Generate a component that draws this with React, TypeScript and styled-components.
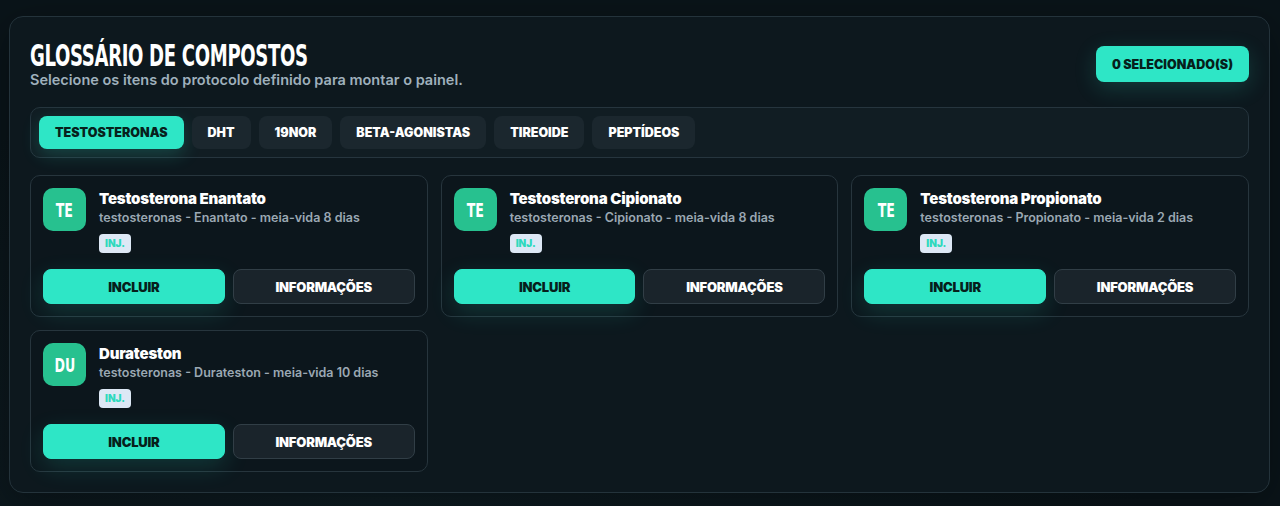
import React from "react";
import styled, { createGlobalStyle } from "styled-components";

const GlobalStyle = createGlobalStyle`
  html, body {
    margin: 0;
    padding: 0;
    background: #0a1419;
  }
  body {
    font-family: Inter, "Noto Sans", sans-serif;
    color: #ffffff;
  }
  * { box-sizing: border-box; }
`;

type Compound = {
  code: string;
  name: string;
  ester: string;
  halfLife: string;
};

const tabs = ["Testosteronas", "DHT", "19Nor", "Beta-agonistas", "Tireoide", "Peptídeos"];

const compounds: Compound[] = [
  { code: "TE", name: "Testosterona Enantato", ester: "Enantato", halfLife: "8 dias" },
  { code: "TE", name: "Testosterona Cipionato", ester: "Cipionato", halfLife: "8 dias" },
  { code: "TE", name: "Testosterona Propionato", ester: "Propionato", halfLife: "2 dias" },
  { code: "DU", name: "Durateston", ester: "Durateston", halfLife: "10 dias" },
];

const App = () => (
  <Page>
    <GlobalStyle />
    <Panel>
      <Header>
        <div>
          <Title>Glossário de compostos</Title>
          <Subtitle>Selecione os itens do protocolo definido para montar o painel.</Subtitle>
        </div>
        <CounterButton>0 selecionado(s)</CounterButton>
      </Header>

      <TabBar>
        {tabs.map((t, i) => (
          <Tab key={t} $active={i === 0}>
            {t}
          </Tab>
        ))}
      </TabBar>

      <Grid>
        {compounds.map((c) => (
          <Card key={c.name}>
            <CardTop>
              <Avatar>
                <span>{c.code}</span>
              </Avatar>
              <CardInfo>
                <CardTitle>{c.name}</CardTitle>
                <CardMeta>
                  testosteronas - {c.ester} - meia-vida {c.halfLife}
                </CardMeta>
                <Badge>INJ.</Badge>
              </CardInfo>
            </CardTop>
            <Actions>
              <ActionButton $primary>Incluir</ActionButton>
              <ActionButton>Informações</ActionButton>
            </Actions>
          </Card>
        ))}
      </Grid>
    </Panel>
  </Page>
);

export default App;

const Page = styled.div`
  width: 1280px;
  height: 506px;
  padding: 16px 10px 13px 9px;
  background: radial-gradient(ellipse at 30% 100%, #0e1c22 0%, #0a1419 60%);
`;

const Panel = styled.section`
  height: 100%;
  border: 1px solid #24333b;
  border-radius: 14px;
  background: #0d181e;
  padding: 24px 20px 20px 20px;
  box-shadow: 0 10px 40px rgba(0, 0, 0, 0.35);
`;

const Header = styled.header`
  display: flex;
  justify-content: space-between;
  align-items: flex-start;
  margin-bottom: 18px;
`;

const condensed = `"DejaVu Sans", "Liberation Sans", sans-serif`;

const Title = styled.h1`
  margin: 0;
  font-family: ${condensed};
  font-stretch: condensed;
  font-weight: 700;
  font-size: 30px;
  line-height: 30px;
  letter-spacing: -0.5px;
  text-transform: uppercase;
  color: #ffffff;
  white-space: nowrap;
  transform: scaleX(0.67);
  transform-origin: left center;
  width: 280px;
`;

const Subtitle = styled.p`
  margin: 0;
  font-size: 14.5px;
  font-weight: 600;
  line-height: 18px;
  color: #9fb0bc;
`;

const CounterButton = styled.button`
  margin-top: 5px;
  height: 36px;
  padding: 0 16px;
  border: none;
  border-radius: 8px;
  background: #2ee6c6;
  color: #06201b;
  font-family: Inter, sans-serif;
  font-weight: 900;
  font-size: 12.5px;
  text-transform: uppercase;
  box-shadow: 0 6px 22px rgba(46, 230, 198, 0.18);
`;

const TabBar = styled.nav`
  display: flex;
  gap: 8px;
  padding: 8px;
  border: 1px solid #26353e;
  border-radius: 10px;
  background: #111d23;
  margin-bottom: 17px;
`;

const Tab = styled.button<{ $active?: boolean }>`
  height: 33px;
  padding: 0 16px;
  border: none;
  border-radius: 8px;
  background: ${({ $active }) => ($active ? "#2ee6c6" : "#1b272e")};
  color: ${({ $active }) => ($active ? "#07211c" : "#ffffff")};
  font-family: Inter, sans-serif;
  font-weight: 900;
  font-size: 12.5px;
  text-transform: uppercase;
  box-shadow: ${({ $active }) => ($active ? "0 6px 18px rgba(46, 230, 198, 0.2)" : "none")};
`;

const Grid = styled.div`
  display: grid;
  grid-template-columns: repeat(3, 1fr);
  gap: 13px 13px;
`;

const Card = styled.article`
  height: 142px;
  padding: 12px;
  border: 1px solid #27353d;
  border-radius: 10px;
  background: #0c161c;
`;

const CardTop = styled.div`
  display: flex;
  gap: 13px;
`;

const Avatar = styled.div`
  flex: none;
  width: 43px;
  height: 43px;
  border-radius: 10px;
  background: #27c18f;
  display: flex;
  align-items: center;
  justify-content: center;
  color: #ffffff;

  span {
    font-family: ${condensed};
    font-stretch: condensed;
    font-weight: 700;
    font-size: 20px;
    transform: scaleX(0.7);
  }
`;

const CardInfo = styled.div`
  display: flex;
  flex-direction: column;
  align-items: flex-start;
  padding-top: 1px;
`;

const CardTitle = styled.h3`
  margin: 0;
  font-size: 15px;
  font-weight: 900;
  line-height: 20px;
  letter-spacing: -0.2px;
  color: #ffffff;
`;

const CardMeta = styled.p`
  margin: 0;
  font-size: 12.5px;
  font-weight: 600;
  line-height: 18px;
  color: #9ba8b3;
`;

const Badge = styled.span`
  margin-top: 7px;
  height: 19px;
  padding: 0 6px;
  border-radius: 4px;
  background: #dde8f5;
  color: #2ed9bd;
  font-size: 10px;
  font-weight: 900;
  line-height: 19px;
`;

const Actions = styled.div`
  display: grid;
  grid-template-columns: 1fr 1fr;
  gap: 8px;
  margin-top: 16px;
`;

const ActionButton = styled.button<{ $primary?: boolean }>`
  height: 35px;
  border-radius: 8px;
  border: 1px solid ${({ $primary }) => ($primary ? "#2ee6c6" : "#313e46")};
  background: ${({ $primary }) => ($primary ? "#2ee6c6" : "#1a242b")};
  color: ${({ $primary }) => ($primary ? "#06201b" : "#ffffff")};
  font-family: Inter, sans-serif;
  font-weight: 900;
  font-size: 13px;
  letter-spacing: -0.2px;
  text-transform: uppercase;
  box-shadow: ${({ $primary }) => ($primary ? "0 8px 24px rgba(46, 230, 198, 0.16)" : "none")};
`;
